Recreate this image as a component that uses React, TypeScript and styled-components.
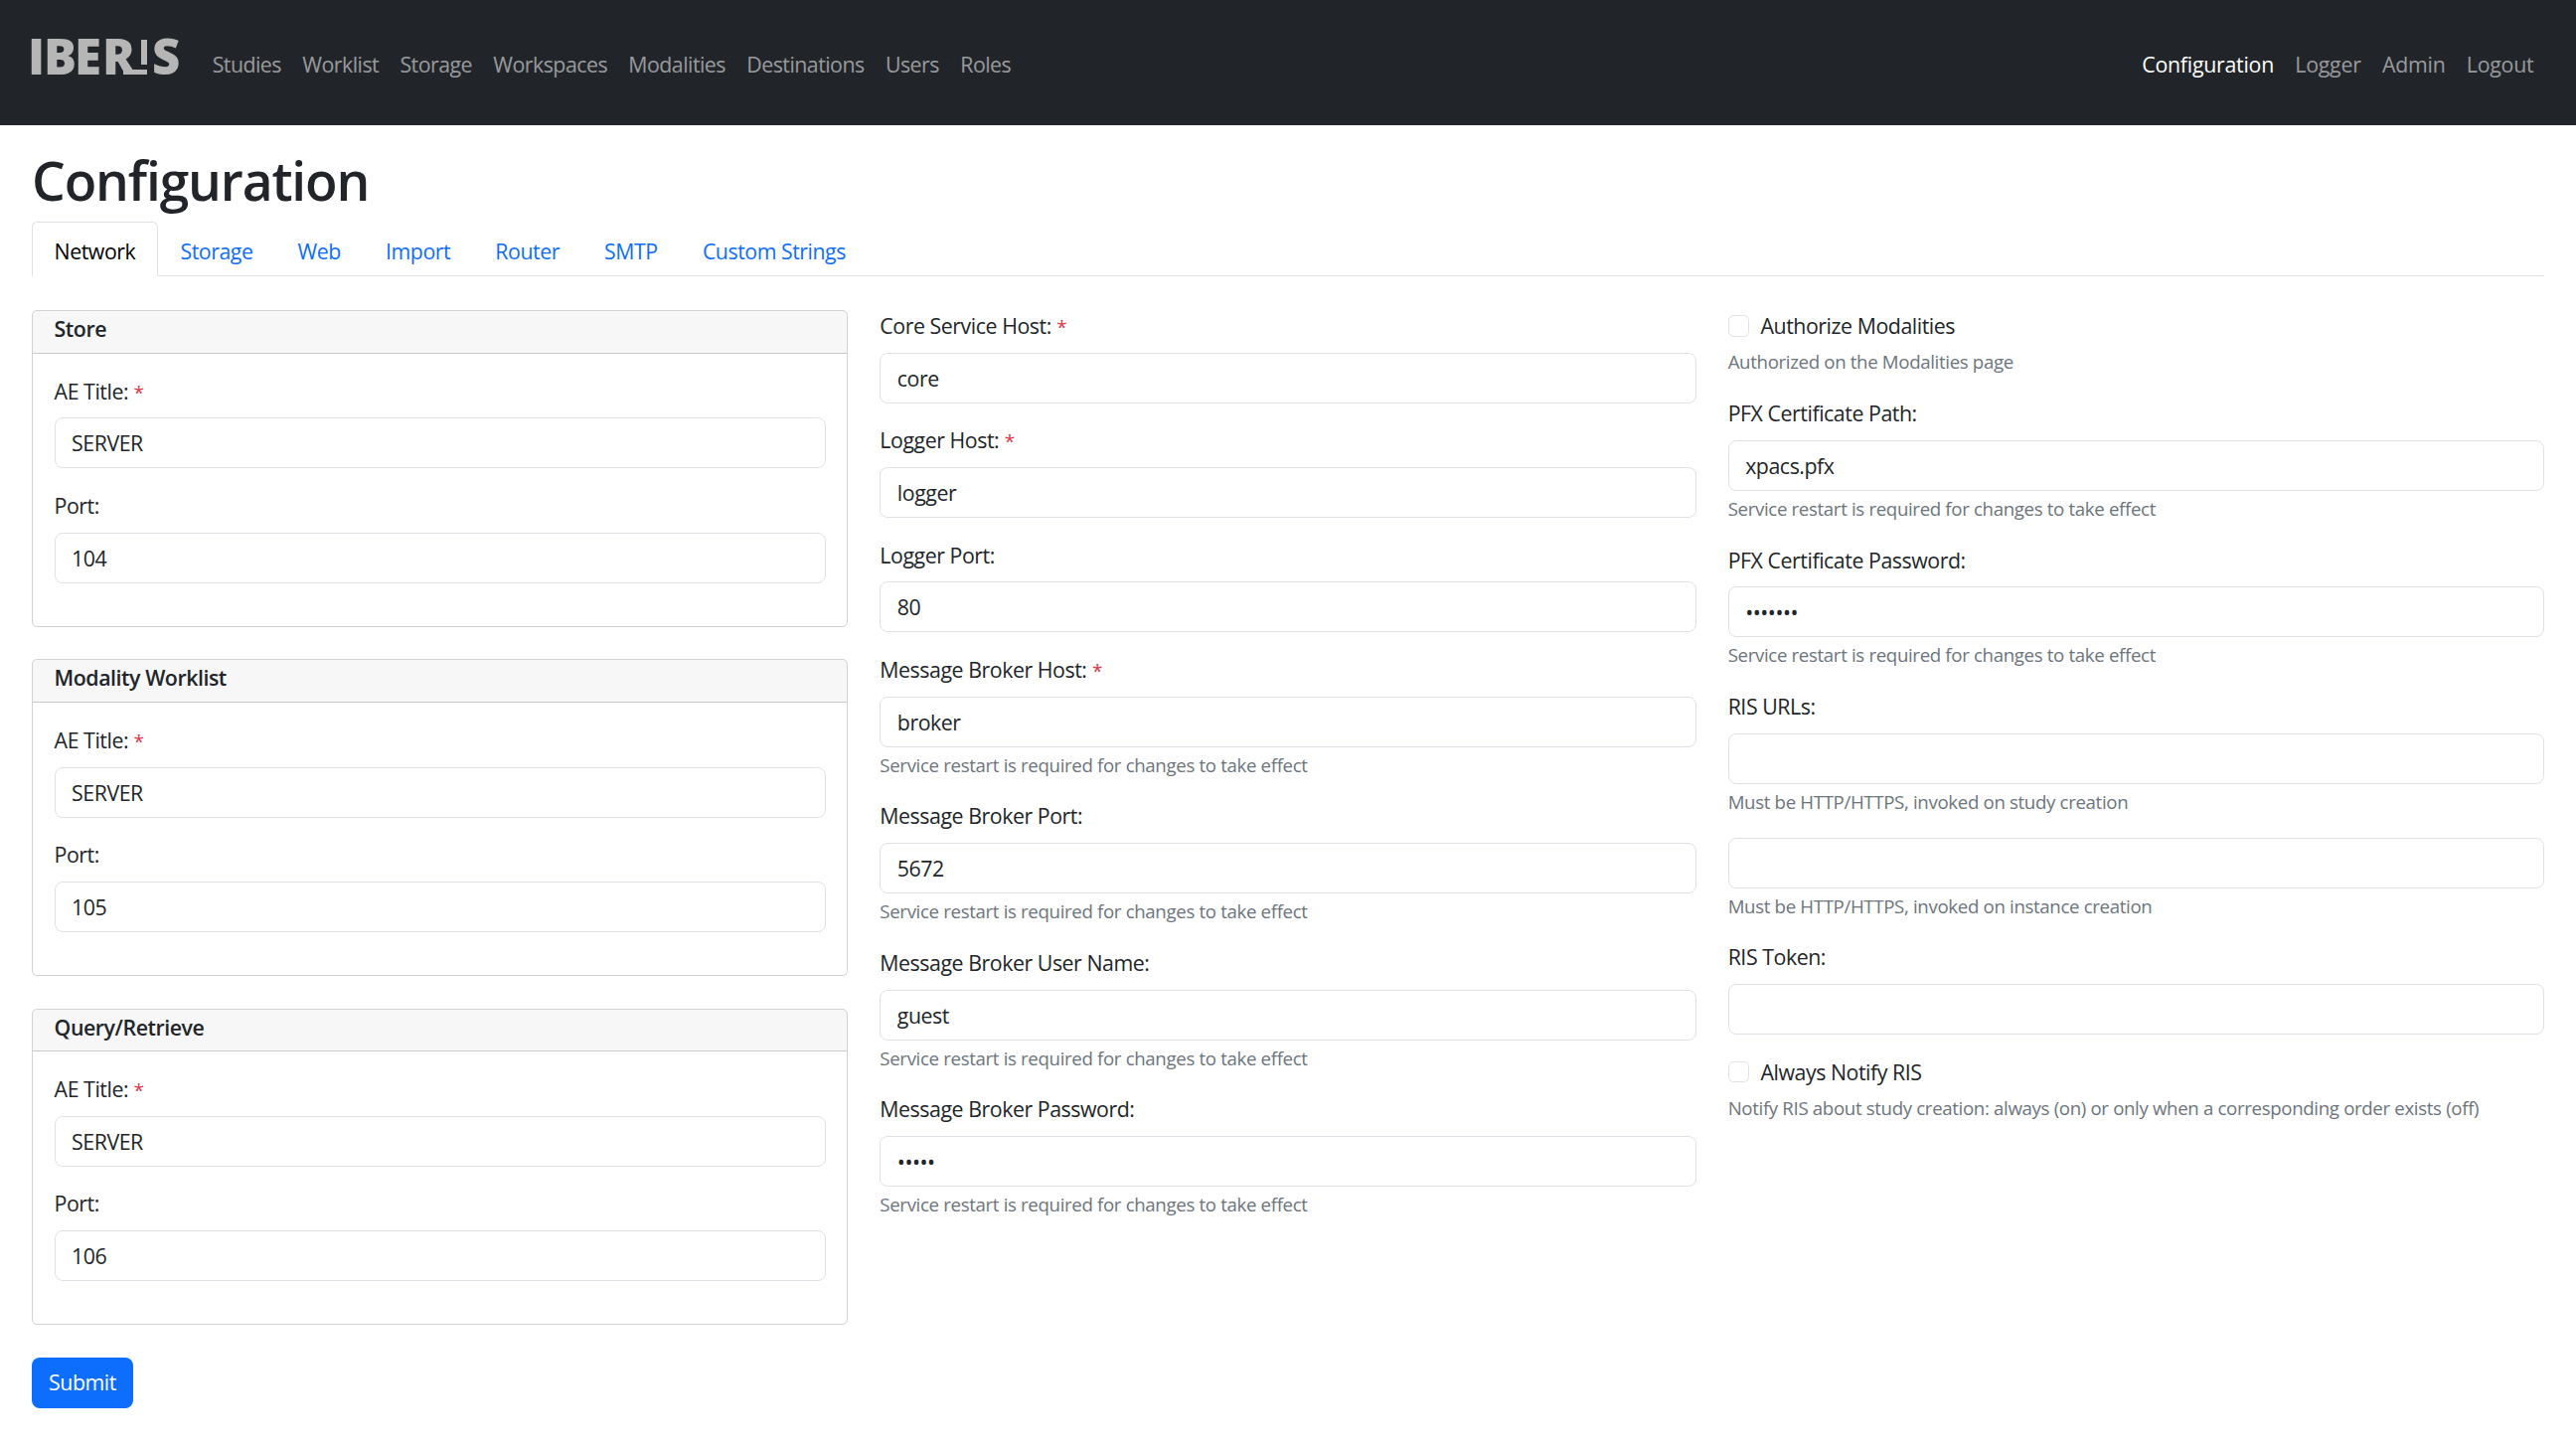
import { FC } from "react";
import styled, { createGlobalStyle } from "styled-components";

const GlobalStyle = createGlobalStyle`
  * { box-sizing: border-box; }
  body {
    margin: 0;
    background: #fff;
    color: #212529;
    font-family: "Open Sans", "Noto Sans", sans-serif;
    font-size: 21.33px;
    line-height: 32px;
    letter-spacing: -0.45px;
  }
`;

const Navbar = styled.nav`
  height: 126px;
  background: #212529;
  padding: 0 32px;
  display: flex;
  align-items: center;
  justify-content: space-between;
`;

const NavGroup = styled.div<{ $spacing: string }>`
  display: flex;
  align-items: center;
  letter-spacing: ${(p) => p.$spacing};
`;

const NavLink = styled.a<{ $active?: boolean }>`
  padding: 4px 10.67px 0;
  color: ${(p) => (p.$active ? "#fff" : "rgba(255, 255, 255, 0.55)")};
`;

const LogoSvg = styled.svg`
  display: block;
  margin-right: 22px;
  overflow: visible;
`;

const Page = styled.main`
  padding: 0 32px;
`;

const Title = styled.h1`
  margin: 0;
  height: 97px;
  padding-top: 24px;
  font-size: 53.33px;
  line-height: 64px;
  font-weight: 600;
  letter-spacing: -1.15px;
`;

const Tabs = styled.div`
  display: flex;
  height: 54.67px;
  border-bottom: 1.33px solid #dee2e6;
`;

const Tab = styled.a<{ $active?: boolean }>`
  height: 55px;
  padding: 13px 21.6px 0;
  border: 1.33px solid ${(p) => (p.$active ? "#dee2e6" : "transparent")};
  border-bottom-color: ${(p) => (p.$active ? "#fff" : "transparent")};
  border-radius: 5.33px 5.33px 0 0;
  background: ${(p) => (p.$active ? "#fff" : "transparent")};
  color: ${(p) => (p.$active ? "#000" : "#0d6efd")};
  letter-spacing: -0.47px;
`;

const Columns = styled.div`
  display: grid;
  grid-template-columns: repeat(3, 1fr);
  column-gap: 32px;
  padding-top: 34.33px;
`;

const Column = styled.div`
  min-width: 0;
`;

const Card = styled.section`
  border: 1.33px solid rgba(0, 0, 0, 0.175);
  border-radius: 5.33px;
  margin-bottom: 32.67px;
  overflow: hidden;
`;

const CardHeader = styled.div`
  height: 42.67px;
  padding: 2px 21.6px;
  background: rgba(0, 0, 0, 0.03);
  border-bottom: 1.33px solid rgba(0, 0, 0, 0.175);
  font-weight: 600;
`;

const CardBody = styled.div`
  padding: 22px 21.6px 21.33px;
`;

const FieldRow = styled.div`
  margin-bottom: 21.67px;
`;

const Label = styled.label`
  display: block;
  height: 32px;
  margin-bottom: 10.67px;
`;

const Required = styled.span`
  margin-left: 1px;
  color: #dc3545;
  font-size: 19px;
`;

const Input = styled.input`
  display: block;
  width: 100%;
  height: 51px;
  padding: 0 16.5px;
  border: 1.33px solid #dee2e6;
  border-radius: 8px;
  background: #fff;
  color: #212529;
  font: inherit;
  letter-spacing: inherit;
  outline: none;
`;

const Help = styled.div`
  margin-top: 4.2px;
  font-size: 18.67px;
  line-height: 28px;
  letter-spacing: -0.34px;
  color: #6c757d;
`;

const CheckHelp = styled(Help)`
  margin-top: 6.5px;
`;

const CheckRow = styled.label`
  display: flex;
  align-items: center;
  height: 32px;
`;

const Checkbox = styled.input`
  appearance: none;
  width: 21.33px;
  height: 21.33px;
  margin: 0 11.5px 0 0;
  border: 1.33px solid #dee2e6;
  border-radius: 5.33px;
  background: #fff;
`;

const SubmitButton = styled.button`
  display: block;
  width: 102px;
  height: 51px;
  padding: 0;
  border: 0;
  border-radius: 8px;
  background: #0d6efd;
  color: #fff;
  font: inherit;
  letter-spacing: inherit;
`;

type FieldProps = {
  label: string;
  value?: string;
  required?: boolean;
  password?: boolean;
  help?: string;
};

const Field: FC<FieldProps> = ({ label, value = "", required, password, help }) => (
  <FieldRow>
    {label && (
      <Label>
        {label}
        {required && <Required> *</Required>}
      </Label>
    )}
    <Input type={password ? "password" : "text"} value={value} readOnly />
    {help && <Help>{help}</Help>}
  </FieldRow>
);

const CheckField: FC<{ label: string; help: string }> = ({ label, help }) => (
  <FieldRow>
    <CheckRow>
      <Checkbox type="checkbox" readOnly />
      {label}
    </CheckRow>
    <CheckHelp>{help}</CheckHelp>
  </FieldRow>
);

const logoText = {
  fill: "#b6b6b6",
  fontFamily: "Open Sans, sans-serif",
  fontWeight: 800,
  fontSize: 49,
  letterSpacing: 0,
};

const Logo = () => (
  <LogoSvg width="149" height="60" viewBox="0 0 149 60">
    <text x="-4 12 43 71" y="42" {...logoText}>
      IBER
    </text>
    <text x="121" y="42" {...logoText}>
      S
    </text>
    <rect x="110" y="7" width="6" height="25" fill="#b6b6b6" />
    <rect x="92" y="37" width="24" height="5" fill="#b6b6b6" />
  </LogoSvg>
);

const restart = "Service restart is required for changes to take effect";
const leftLinks = ["Studies", "Worklist", "Storage", "Workspaces", "Modalities", "Destinations", "Users", "Roles"];
const tabs = ["Network", "Storage", "Web", "Import", "Router", "SMTP", "Custom Strings"];
const cards = [
  { title: "Store", port: "104" },
  { title: "Modality Worklist", port: "105" },
  { title: "Query/Retrieve", port: "106" },
];

export default function App() {
  return (
    <>
      <GlobalStyle />
      <Navbar>
        <NavGroup $spacing="-0.52px">
          <Logo />
          {leftLinks.map((l) => (
            <NavLink key={l}>{l}</NavLink>
          ))}
        </NavGroup>
        <NavGroup $spacing="-0.25px">
          <NavLink $active>Configuration</NavLink>
          <NavLink>Logger</NavLink>
          <NavLink>Admin</NavLink>
          <NavLink>Logout</NavLink>
        </NavGroup>
      </Navbar>
      <Page>
        <Title>Configuration</Title>
        <Tabs>
          {tabs.map((t, i) => (
            <Tab key={t} $active={i === 0}>
              {t}
            </Tab>
          ))}
        </Tabs>
        <Columns>
          <Column>
            {cards.map((c) => (
              <Card key={c.title}>
                <CardHeader>{c.title}</CardHeader>
                <CardBody>
                  <Field label="AE Title:" value="SERVER" required />
                  <Field label="Port:" value={c.port} />
                </CardBody>
              </Card>
            ))}
            <SubmitButton type="button">Submit</SubmitButton>
          </Column>
          <Column>
            <Field label="Core Service Host:" value="core" required />
            <Field label="Logger Host:" value="logger" required />
            <Field label="Logger Port:" value="80" />
            <Field label="Message Broker Host:" value="broker" required help={restart} />
            <Field label="Message Broker Port:" value="5672" help={restart} />
            <Field label="Message Broker User Name:" value="guest" help={restart} />
            <Field label="Message Broker Password:" value="guest" password help={restart} />
          </Column>
          <Column>
            <CheckField label="Authorize Modalities" help="Authorized on the Modalities page" />
            <Field label="PFX Certificate Path:" value="xpacs.pfx" help={restart} />
            <Field label="PFX Certificate Password:" value="1234567" password help={restart} />
            <Field label="RIS URLs:" help="Must be HTTP/HTTPS, invoked on study creation" />
            <Field label="" help="Must be HTTP/HTTPS, invoked on instance creation" />
            <Field label="RIS Token:" />
            <CheckField
              label="Always Notify RIS"
              help="Notify RIS about study creation: always (on) or only when a corresponding order exists (off)"
            />
          </Column>
        </Columns>
      </Page>
    </>
  );
}
